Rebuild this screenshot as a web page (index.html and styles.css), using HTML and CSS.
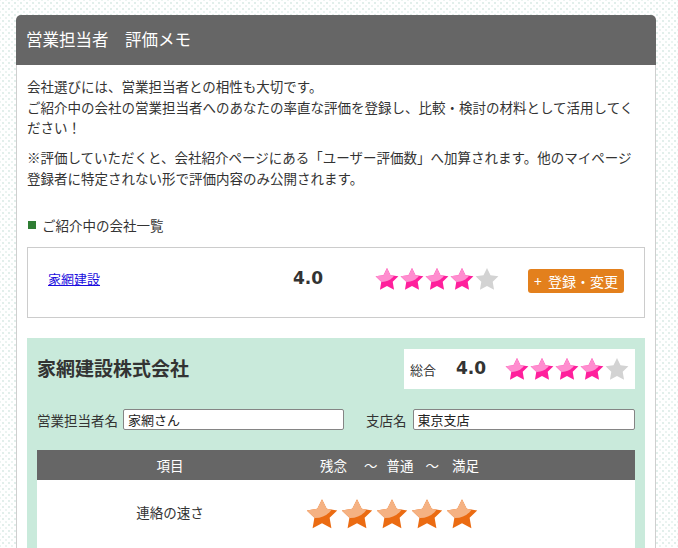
FILE: index.html
```html
<!DOCTYPE html>
<html lang="ja">
<head>
<meta charset="utf-8">
<title>営業担当者 評価メモ</title>
<link rel="stylesheet" href="styles.css">
</head>
<body>
<svg class="defs" width="0" height="0" aria-hidden="true">
  <defs>
    <path id="starpath" d="M12 1 L15.53 8.15 L23.41 9.29 L17.71 14.85 L19.05 22.71 L12 19 L4.95 22.71 L6.29 14.85 L0.59 9.29 L8.47 8.15 Z"/>
    <clipPath id="starclip"><use href="#starpath"/></clipPath>
    <symbol id="s-pink" viewBox="0 0 24 24">
      <use href="#starpath" fill="#ff1f9c"/>
      <circle cx="7" cy="0" r="15" fill="#ff8dcf" clip-path="url(#starclip)"/>
    </symbol>
    <symbol id="s-orange" viewBox="0 0 24 24">
      <use href="#starpath" fill="#eb6b12"/>
      <circle cx="7" cy="0" r="15" fill="#f5b283" clip-path="url(#starclip)"/>
    </symbol>
    <symbol id="s-grey" viewBox="0 0 24 24">
      <use href="#starpath" fill="#d3d3d3"/>
    </symbol>
  </defs>
</svg>

<div class="page">
  <div class="head">営業担当者　評価メモ</div>
  <div class="body">
    <p class="intro">会社選びには、営業担当者との相性も大切です。<br>ご紹介中の会社の営業担当者へのあなたの率直な評価を登録し、比較・検討の材料として活用してください！</p>
    <p class="note">※評価していただくと、会社紹介ページにある「ユーザー評価数」へ加算されます。他のマイページ<br>登録者に特定されない形で評価内容のみ公開されます。</p>

    <h3 class="sec">ご紹介中の会社一覧</h3>
    <div class="list-box">
      <a class="co-link" href="#">家網建設</a>
      <span class="score">4.0</span>
      <span class="stars pink">
        <svg><use href="#s-pink"/></svg><svg><use href="#s-pink"/></svg><svg><use href="#s-pink"/></svg><svg><use href="#s-pink"/></svg><svg><use href="#s-grey"/></svg>
      </span>
      <button class="btn"><span class="plus">+</span>登録・変更</button>
    </div>

    <div class="panel">
      <div class="panel-top">
        <h2 class="co-name">家網建設株式会社</h2>
        <div class="total">
          <span class="total-label">総合</span>
          <span class="score">4.0</span>
          <span class="stars pink">
            <svg><use href="#s-pink"/></svg><svg><use href="#s-pink"/></svg><svg><use href="#s-pink"/></svg><svg><use href="#s-pink"/></svg><svg><use href="#s-grey"/></svg>
          </span>
        </div>
      </div>
      <div class="form-row">
        <label class="lbl">営業担当者名</label>
        <input class="inp inp-a" type="text" value="家網さん">
        <label class="lbl lbl-b">支店名</label>
        <input class="inp inp-b" type="text" value="東京支店">
      </div>
      <div class="table">
        <div class="th th-item">項目</div>
        <div class="th th-scale"><span class="sc sc1">残念</span><span class="sc sc2">～</span><span class="sc sc3">普通</span><span class="sc sc4">～</span><span class="sc">満足</span></div>
        <div class="td td-item">連絡の速さ</div>
        <div class="td td-stars">
          <span class="stars orange">
            <svg><use href="#s-orange"/></svg><svg><use href="#s-orange"/></svg><svg><use href="#s-orange"/></svg><svg><use href="#s-orange"/></svg><svg><use href="#s-orange"/></svg>
          </span>
        </div>
      </div>
    </div>
  </div>
</div>
</body>
</html>
```

FILE: styles.css
```css
html, body {
  margin: 0;
  padding: 0;
}
body {
  background-color: #ffffff;
  background-image:
    radial-gradient(circle, #e2efeb 0.8px, transparent 1.2px),
    radial-gradient(circle, #ebf4f1 0.8px, transparent 1.2px);
  background-size: 6px 6px, 6px 6px;
  background-position: 0 0, 3px 3px;
  font-family: "Noto Sans CJK JP", "Noto Sans", sans-serif;
  color: #333;
  height: 548px;
  overflow: hidden;
}
.defs {
  position: absolute;
  width: 0;
  height: 0;
}
.page {
  width: 640px;
  margin: 15px 0 0 16px;
}
.head {
  height: 50px;
  line-height: 49px;
  background: #666666;
  color: #fff;
  font-size: 16.5px;
  padding-left: 10px;
  border-radius: 5px 5px 0 0;
}
.body {
  background: #fff;
  border-left: 1px solid #cfcfcf;
  border-right: 1px solid #cfcfcf;
  padding: 11px 10px 40px 10px;
  min-height: 500px;
}
.intro, .note {
  margin: 0;
  font-size: 13.5px;
  line-height: 20.5px;
}
.note {
  margin-top: 9.5px;
}
.sec {
  margin: 27px 0 0 0;
  font-size: 13.5px;
  font-weight: normal;
  line-height: 20px;
  display: flex;
  align-items: center;
}
.sec::before {
  content: "";
  width: 8px;
  height: 8px;
  background: #2f7d34;
  margin: 0 6px 0 1px;
}
.list-box {
  margin-top: 12px;
  border: 1px solid #cccccc;
  height: 61px;
  padding: 0 20px 8px 20px;
  display: grid;
  grid-template-columns: 245px 82px 153px auto;
  align-items: center;
}
.co-link {
  color: #1a0dde;
  font-size: 13px;
  text-decoration: underline;
}
.score {
  font-family: "DejaVu Sans", sans-serif;
  font-weight: bold;
  font-size: 17px;
  color: #333;
  margin-top: -2px;
}
.stars {
  display: flex;
  align-items: center;
}
.stars.pink svg {
  width: 24px;
  height: 24px;
  margin-right: 1px;
}
.stars.orange svg {
  width: 32px;
  height: 32px;
  margin-right: 3px;
}
.btn {
  justify-self: start;
  width: 96px;
  height: 24px;
  border: none;
  border-radius: 3px;
  background: #e3801d;
  color: #fff;
  font-family: "Noto Sans CJK JP", sans-serif;
  font-size: 14px;
  padding: 0;
  margin-top: 4px;
  line-height: 24px;
}
.plus {
  margin-right: 6px;
}
.panel {
  margin-top: 20px;
  background: #c9eadb;
  padding: 11px 10px 20px 10px;
}
.panel-top {
  display: flex;
  justify-content: space-between;
  align-items: center;
}
.co-name {
  margin: -3px 0 0 0;
  font-size: 19px;
  font-weight: bold;
  color: #333;
}
.total {
  width: 231px;
  height: 40px;
  box-sizing: border-box;
  background: #fff;
  display: grid;
  grid-template-columns: 46px 49px auto;
  align-items: center;
  padding-left: 6px;
}
.total-label {
  font-size: 13px;
}
.form-row {
  margin-top: 20px;
  display: flex;
  align-items: center;
}
.lbl {
  font-size: 13.5px;
  margin-right: 5px;
}
.lbl-b {
  margin-left: 22px;
  margin-right: 6px;
}
.inp {
  height: 21px;
  box-sizing: border-box;
  border: 1px solid #858585;
  border-radius: 2px;
  font-family: "Noto Sans CJK JP", sans-serif;
  font-size: 13px;
  color: #222;
  padding: 0 4px;
  background: #fff;
}
.inp-a {
  width: 221px;
}
.inp-b {
  flex: 1;
  min-width: 0;
}
.table {
  margin-top: 20px;
  display: grid;
  grid-template-columns: 266px 1fr;
  background: #fff;
}
.th {
  background: #666666;
  color: #fff;
  height: 30px;
  line-height: 30px;
  font-size: 13.5px;
}
.th-item {
  text-align: center;
}
.th-scale {
  padding-left: 17px;
  display: flex;
}
.sc1 { margin-right: 17px; }
.sc2 { margin-right: 9px; }
.sc3 { margin-right: 12px; }
.sc4 { margin-right: 13px; }
.td {
  height: 68px;
  display: flex;
  align-items: center;
}
.td-item {
  justify-content: center;
  font-size: 13.5px;
  margin-top: -2px;
}
.td-stars {
  padding-left: 3px;
}
```
